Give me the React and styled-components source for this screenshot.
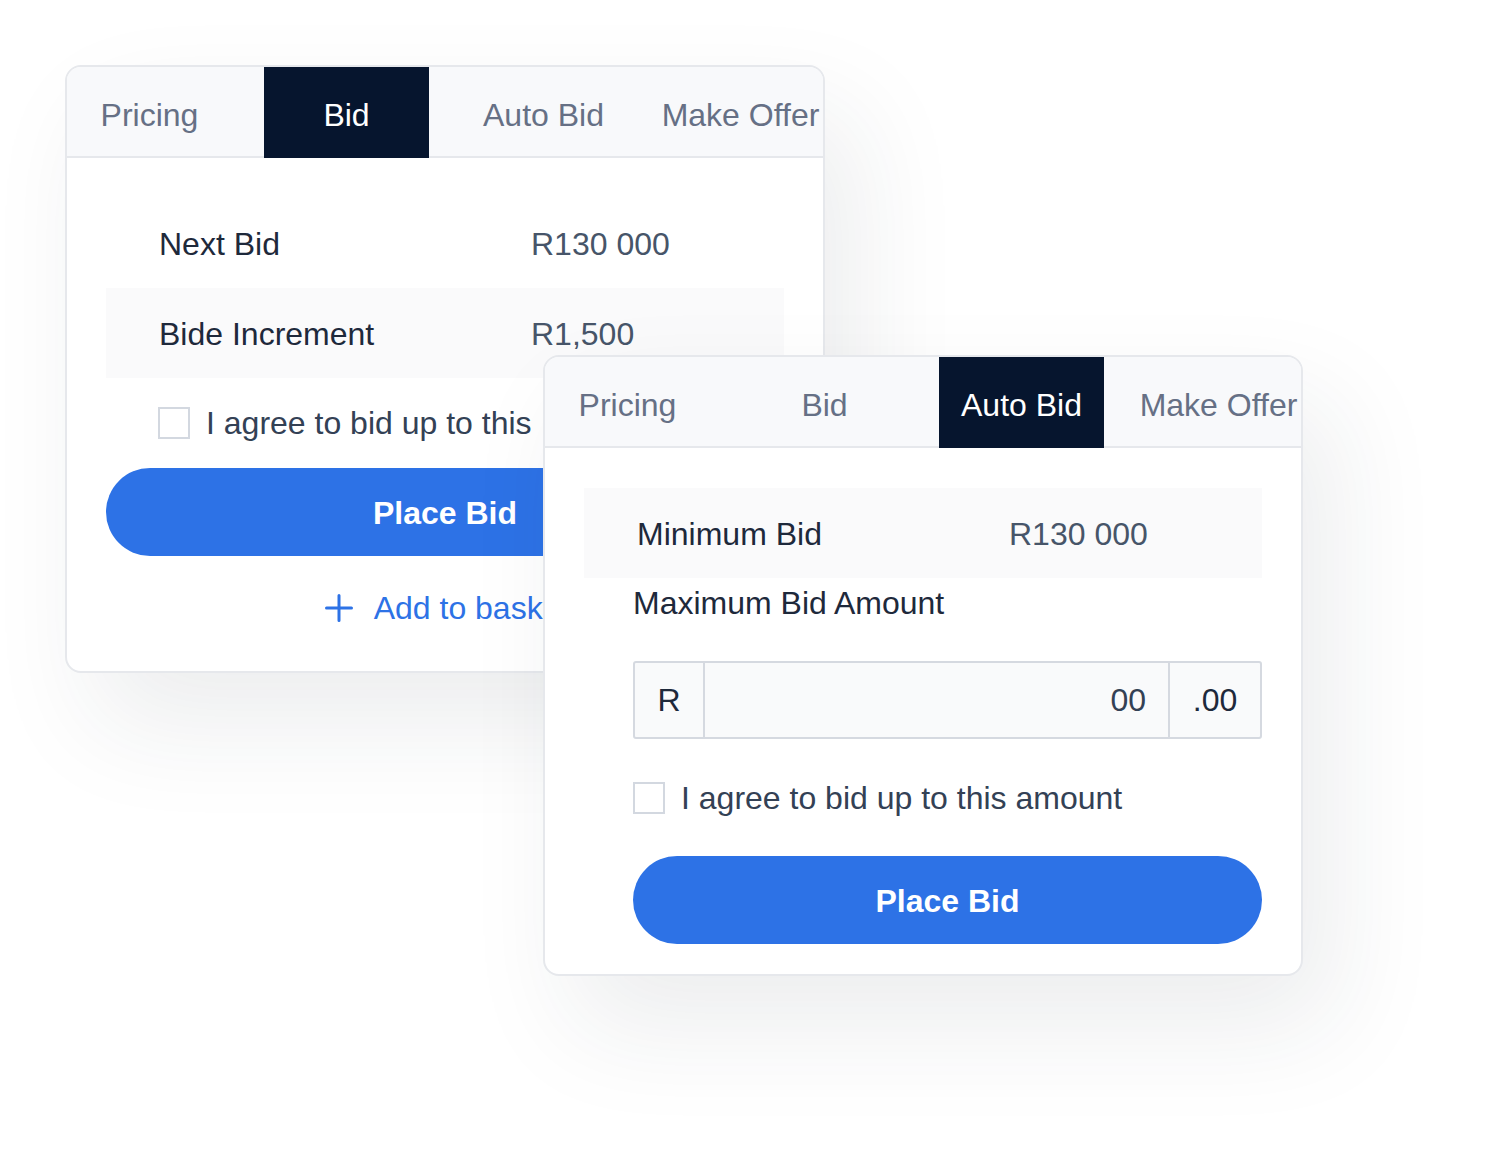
import React from "react";
import styled, { createGlobalStyle } from "styled-components";

const Global = createGlobalStyle`
  html, body { margin: 0; padding: 0; background: #ffffff; }
  body { font-family: "Liberation Sans", Arial, Helvetica, sans-serif; }
  * { box-sizing: border-box; }
`;

const Stage = styled.div`
  position: relative;
  width: 1496px;
  height: 1170px;
  padding: 65px 0 0 65px;
  overflow: hidden;
`;

const Card = styled.div`
  width: 760px;
  background: #ffffff;
  border: 2px solid #e6e8ec;
  border-radius: 16px;
  overflow: hidden;
  box-shadow: 30px 50px 110px rgba(30, 41, 59, 0.085);
`;

const FloatingCard = styled(Card)`
  position: absolute;
  left: 543px;
  top: 355px;
`;

const TabBar = styled.div`
  display: flex;
  gap: 32px;
  height: 91px;
  background: #f8f9fb;
  border-bottom: 2px solid #e6e8ec;
`;

const Tab = styled.div`
  flex: 0 0 165px;
  height: 91px;
  margin-bottom: -2px;
  padding-top: 6px;
  display: flex;
  align-items: center;
  justify-content: center;
  white-space: nowrap;
  font-size: 32px;
  color: ${(p) => (p.$active ? "#ffffff" : "#667085")};
  background: ${(p) => (p.$active ? "#06152e" : "transparent")};
`;

const Body = styled.div`
  padding: 40px 39px ${(p) => p.$bottom || 30}px;
`;

const InfoRow = styled.div`
  display: grid;
  grid-template-columns: 372px 1fr;
  align-items: center;
  height: 90px;
  padding-left: 53px;
  padding-top: 2px;
  background: ${(p) => (p.$shaded ? "#fafafb" : "transparent")};
  font-size: 32px;
`;

const Label = styled.span`
  color: #1e293b;
`;

const Value = styled.span`
  color: #475569;
`;

const CheckRow = styled.label`
  display: flex;
  align-items: center;
  gap: 16px;
  height: ${(p) => p.$h || 50}px;
  max-width: ${(p) => p.$maxW || "none"};
  overflow: hidden;
  margin-left: ${(p) => p.$indent || 0}px;
  margin-top: ${(p) => p.$mt || 0}px;
  font-size: 32px;
  color: #334155;
  white-space: nowrap;
`;

const Box = styled.span`
  flex: 0 0 32px;
  width: 32px;
  height: 32px;
  border: 2px solid #d3d8e0;
  background: #ffffff;
`;

const PrimaryButton = styled.button`
  display: flex;
  align-items: center;
  justify-content: center;
  width: 100%;
  height: 88px;
  margin-top: ${(p) => p.$mt || 0}px;
  padding: 2px 0 0;
  border: none;
  border-radius: 44px;
  background: #2d72e6;
  color: #ffffff;
  font-family: inherit;
  font-size: 32px;
  font-weight: 700;
`;

const AddRow = styled.div`
  display: flex;
  align-items: center;
  justify-content: center;
  gap: 21px;
  height: 64px;
  margin-top: 20px;
  padding-left: 4px;
  font-size: 32px;
  color: #2d72e6;
  white-space: nowrap;
`;

const Form = styled.div`
  margin-left: 49px;
`;

const FieldLabel = styled.div`
  height: 50px;
  display: flex;
  align-items: center;
  font-size: 32px;
  color: #1e293b;
`;

const InputGroup = styled.div`
  display: flex;
  height: 78px;
  margin-top: 33px;
  border: 2px solid #d5d9e0;
  border-radius: 3px;
  background: #f9fafb;
  font-size: 32px;
  color: #1e293b;
`;

const Addon = styled.div`
  flex: 0 0 ${(p) => p.$w}px;
  display: flex;
  align-items: center;
  justify-content: center;
  border-${(p) => p.$side}: 2px solid #d5d9e0;
`;

const AmountInput = styled.div`
  flex: 1;
  display: flex;
  align-items: center;
  justify-content: flex-end;
  padding-right: 22px;
  color: #334155;
`;

const PlusIcon = () => (
  <svg width="28" height="28" viewBox="0 0 28 28" fill="none">
    <path d="M14 1.5v25M1.5 14h25" stroke="#2d72e6" strokeWidth="3" strokeLinecap="round" />
  </svg>
);

const tabs = ["Pricing", "Bid", "Auto Bid", "Make Offer"];

const Tabs = ({ active }) => (
  <TabBar>
    {tabs.map((t) => (
      <Tab key={t} $active={t === active}>
        {t}
      </Tab>
    ))}
  </TabBar>
);

export default function App() {
  return (
    <>
      <Global />
      <Stage>
        <Card>
          <Tabs active="Bid" />
          <Body $bottom={31}>
            <InfoRow>
              <Label>Next Bid</Label>
              <Value>R130 000</Value>
            </InfoRow>
            <InfoRow $shaded>
              <Label>Bide Increment</Label>
              <Value>R1,500</Value>
            </InfoRow>
            <CheckRow $h={90} $indent={52} $maxW="380px">
              <Box />
              I agree to bid up to this amount
            </CheckRow>
            <PrimaryButton>Place Bid</PrimaryButton>
            <AddRow>
              <PlusIcon />
              Add to basket
            </AddRow>
          </Body>
        </Card>

        <FloatingCard>
          <Tabs active="Auto Bid" />
          <Body $bottom={30}>
            <InfoRow $shaded>
              <Label>Minimum Bid</Label>
              <Value>R130 000</Value>
            </InfoRow>
            <Form>
              <FieldLabel>Maximum Bid Amount</FieldLabel>
              <InputGroup>
                <Addon $w={70} $side="right">R</Addon>
                <AmountInput>00</AmountInput>
                <Addon $w={92} $side="left">.00</Addon>
              </InputGroup>
              <CheckRow $mt={34}>
                <Box />
                I agree to bid up to this amount
              </CheckRow>
              <PrimaryButton $mt={33}>Place Bid</PrimaryButton>
            </Form>
          </Body>
        </FloatingCard>
      </Stage>
    </>
  );
}
